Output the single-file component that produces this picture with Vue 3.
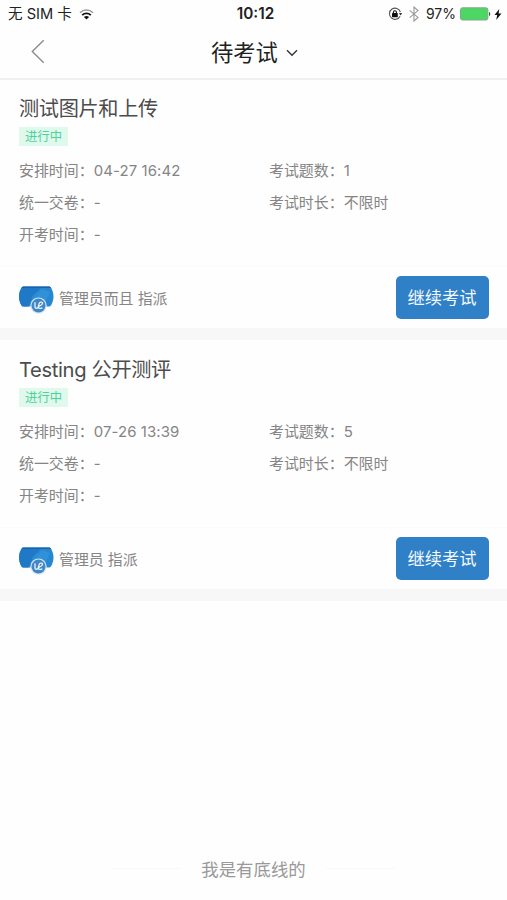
<template>
  <div class="page">
    <header class="status-bar">
      <div class="status-left">
        <span class="carrier">无 SIM 卡</span>
        <svg class="wifi" width="15" height="11" viewBox="0 0 15 11" fill="none">
          <path d="M1 3.8C4.6 .2 10.4 .2 14 3.8" stroke="#999" stroke-width="1.5" />
          <path d="M3.2 6.1c2.4-2.3 6.2-2.3 8.6 0" stroke="#111" stroke-width="1.8" />
          <path d="M7.5 10.6 4.9 8c1.4-1.3 3.8-1.3 5.2 0z" fill="#111" />
        </svg>
      </div>
      <span class="clock">10:12</span>
      <div class="status-right">
        <svg class="lock" width="15" height="14" viewBox="0 0 15 14" fill="none">
          <path d="M12.1 9.2A5.6 5.6 0 1 1 12.4 5" stroke="#555" stroke-width="1.1" />
          <path d="M10.9 6h3.3l-1.6 2.4z" fill="#333" />
          <rect x="4" y="6" width="5.8" height="4.2" rx=".4" fill="#111" />
          <path d="M5.4 6.4V5.2a1.5 1.5 0 0 1 3 0v1.2" stroke="#111" stroke-width="1.1" />
        </svg>
        <svg class="bluetooth" width="10" height="16" viewBox="0 0 10 16" fill="none">
          <path d="M.7 4.3 9 11.4 5 15V1l4 3.6-8.3 7.1" stroke="#999" stroke-width="1.1" />
        </svg>
        <span class="percent">97%</span>
        <svg class="battery" width="31" height="14" viewBox="0 0 31 14">
          <rect x=".5" y=".8" width="27.4" height="12.2" rx="2" fill="#4cd764" stroke="#8aa58d" />
          <path d="M29 5c1.6.3 1.6 3.7 0 4z" fill="#444" />
        </svg>
        <svg class="bolt" width="8" height="11" viewBox="0 0 8 11">
          <path d="M5.3 0 .5 6h2.7l-1 5L7.5 4.6H4.6z" fill="#111" />
        </svg>
      </div>
    </header>

    <nav class="nav-bar">
      <svg class="back" width="14" height="25" viewBox="0 0 14 25" fill="none">
        <path d="M12.7 1.3 1.3 12.4l11.4 11.3" stroke="#8c8c8c" stroke-width="1.4" />
      </svg>
      <h1>待考试</h1>
      <svg class="arrow" width="12" height="8" viewBox="0 0 12 8" fill="none">
        <path d="M1 1.2 6 6.2l5-5" stroke="#333" stroke-width="1.4" />
      </svg>
    </nav>

    <section v-for="exam in exams" :key="exam.title" class="card">
      <div class="card-body">
        <h2>{{ exam.title }}</h2>
        <span class="tag">进行中</span>
        <div class="info">
          <p>安排时间：<span class="date">{{ exam.time }}</span></p>
          <p>考试题数：{{ exam.count }}</p>
          <p>统一交卷：-</p>
          <p>考试时长：不限时</p>
          <p>开考时间：-</p>
        </div>
      </div>
      <div class="card-footer">
        <svg class="avatar" width="36" height="28" viewBox="0 0 36 28">
          <path d="M5 .5h26.500c1.400 0 4 5 4 10s-2.600 10-4 10H5c-1.400 0-4-5-4-10s2.600-10 4-10z" fill="#2787d1" />
          <path d="M5 .5h26.500q.8 0 1.500 1.500H3.500Q4.200.5 5 .5z" fill="#1862ac" />
          <path d="M3.500 2h19l-8 8-4 10.500H5c-1.400 0-4-5-4-10Q1 5.500 3.500 2z" fill="#1f79c6" />
          <path d="m23 3 9 3-4 9-8-4z" fill="#3b9be0" opacity=".5" />
          <path d="m14 11 7-6 5 10-9 4z" fill="#2f96de" opacity=".5" />
          <circle cx="20.500" cy="19.600" r="8.200" fill="#d5e6f5" />
          <circle cx="20.500" cy="19.600" r="7" fill="#4386c4" />
          <path d="M17 16.300v4.200q0 2.100 1.900 1.700 1-.2 1.400-1.600l.8-2.900q.6-1.700 2.200-1.500c2 .3 1.400 2.500-.9 3.300q-2.400 1-1.700 2.400.5.900 3.700-.1" fill="none" stroke="#e6f3ff" stroke-width="1.300" />
        </svg>
        <span class="owner">{{ exam.owner }} 指派</span>
        <button>继续考试</button>
      </div>
    </section>

    <footer class="bottom-line">
      <i></i>
      <span>我是有底线的</span>
      <i></i>
    </footer>
  </div>
</template>

<script setup>
const exams = [
  { title: '测试图片和上传', time: '04-27 16:42', count: 1, owner: '管理员而且' },
  { title: 'Testing 公开测评', time: '07-26 13:39', count: 5, owner: '管理员' },
];
</script>

<style>
body {
  margin: 0;
  background: #fefefe;
}
</style>

<style scoped>
.page {
  display: flex;
  flex-direction: column;
  width: 507px;
  height: 900px;
  overflow: hidden;
  background: #fefefe;
  font-family: Inter, "Noto Sans CJK SC", sans-serif;
}

h1, h2, p {
  margin: 0;
  font-weight: 400;
}

svg {
  flex: none;
}

.status-bar {
  display: grid;
  grid-template-columns: 1fr auto 1fr;
  align-items: center;
  height: 28px;
  box-sizing: border-box;
  padding: 0 5px 0 8px;
  font-size: 14.3px;
  line-height: 28px;
  color: #222;
  white-space: nowrap;
}

.status-left,
.status-right {
  display: flex;
  align-items: center;
}

.carrier {
  font-size: 14.6px;
}

.wifi {
  margin-left: 7px;
}

.clock {
  padding-left: 1px;
  font-weight: 600;
  font-size: 15.3px;
}

.status-right {
  justify-content: flex-end;
}

.bluetooth {
  margin: 0 7px 0 6px;
}

.percent {
  font-size: 14px;
}

.battery {
  margin: 0 3px 0 4px;
}

.nav-bar {
  display: flex;
  align-items: center;
  height: 50px;
  padding-left: 31px;
  border-bottom: 1px solid #f0f0f0;
  box-shadow: 0 1px 0 #f0f0f0;
}

.back {
  margin-bottom: 3px;
}

.nav-bar h1 {
  margin-left: 166px;
  font-size: 22.3px;
  line-height: 48px;
  color: #222;
}

.arrow {
  margin-left: 8px;
}

.card {
  height: 247px;
  padding-top: 2px;
  border-bottom: 12px solid #f7f7f7;
}

.card-body {
  height: 186px;
  padding-left: 19px;
  box-sizing: border-box;
  border-bottom: 1px solid #fafafa;
}

.card h2 {
  height: 30px;
  padding-top: 13px;
  font-size: 20.2px;
  line-height: 30px;
  letter-spacing: -0.35px;
  color: #4c4c4c;
}

.tag {
  display: block;
  width: 49px;
  height: 19px;
  margin-top: 3px;
  background: #e0f9ed;
  color: #4fd19a;
  font-size: 12.4px;
  line-height: 19px;
  text-align: center;
}

.info {
  display: grid;
  grid-template-columns: 250px 1fr;
  grid-auto-rows: 32px;
  margin-top: 9px;
  font-size: 14.95px;
  line-height: 32px;
  color: #858585;
}

.date {
  letter-spacing: 0.1px;
}

.card-footer {
  display: flex;
  align-items: center;
  height: 61px;
  padding: 0 18px 0 18px;
}

.avatar {
  margin-top: 5px;
}

.owner {
  margin-left: 5px;
  font-size: 14.9px;
  color: #858585;
}

.card-footer button {
  width: 93px;
  height: 43px;
  margin-left: auto;
  padding: 0 1px 2px 0;
  border: 0;
  border-radius: 5px;
  background: #2f80c7;
  color: #f4f9fd;
  font-family: inherit;
  font-size: 17.3px;
}

.bottom-line {
  display: flex;
  align-items: center;
  justify-content: center;
  gap: 20px;
  margin-top: auto;
  height: 63px;
  font-size: 17.4px;
  color: #999;
}

.bottom-line i {
  width: 70px;
  height: 1px;
  background: #f9f9f9;
}
</style>
